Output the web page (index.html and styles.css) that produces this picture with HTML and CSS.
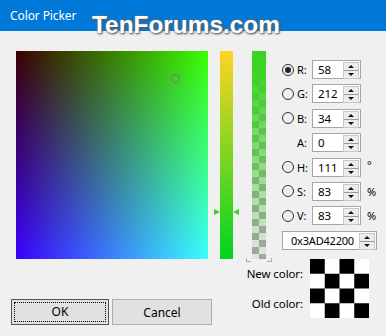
FILE: index.html
```html
<!doctype html>
<html>
<head>
<meta charset="utf-8">
<title>Color Picker</title>
<link rel="stylesheet" href="styles.css">
</head>
<body>
<div class="titlebar">Color Picker</div>
<div class="watermark">TenForums.com</div>

<div class="main">
  <div class="field"><span class="ring" style="left:155px;top:23px"></span></div>
  <div class="rstrip">
    <span class="arrow arrow-l" style="top:158px"></span>
    <span class="arrow arrow-r" style="top:158px"></span>
  </div>
  <div class="astrip">
    <span class="thumb thumb-l"></span>
    <span class="thumb thumb-r"></span>
  </div>

  <div class="panel">
    <div class="row"><span class="radio on"></span><span class="lbl">R:</span><span class="box">58<i class="spin"></i></span><span class="unit"></span></div>
    <div class="row"><span class="radio"></span><span class="lbl">G:</span><span class="box">212<i class="spin"></i></span><span class="unit"></span></div>
    <div class="row"><span class="radio"></span><span class="lbl">B:</span><span class="box">34<i class="spin"></i></span><span class="unit"></span></div>
    <div class="row"><span></span><span class="lbl">A:</span><span class="box">0<i class="spin"></i></span><span class="unit"></span></div>
    <div class="row"><span class="radio"></span><span class="lbl">H:</span><span class="box">111<i class="spin"></i></span><span class="unit deg">°</span></div>
    <div class="row"><span class="radio"></span><span class="lbl">S:</span><span class="box">83<i class="spin"></i></span><span class="unit">%</span></div>
    <div class="row"><span class="radio"></span><span class="lbl">V:</span><span class="box">83<i class="spin"></i></span><span class="unit">%</span></div>
    <div class="row hexrow"><span class="box hex">0x3AD42200<i class="spin"></i></span></div>
  </div>
</div>

<div class="bottom">
  <div class="buttons">
    <button class="btn focus"><span>OK</span></button>
    <button class="btn">Cancel</button>
  </div>
  <div class="preview">
    <div class="plabels">
      <span>New color:</span>
      <span>Old color:</span>
    </div>
    <div class="swatch"></div>
  </div>
</div>
</body>
</html>
```

FILE: styles.css
```css
body{
margin:0;
background:#f0f0f0;
font-family:"Noto Sans","Open Sans",sans-serif;
font-size:11px;
letter-spacing:-0.1px;
color:#000;
width:386px;
height:336px;
overflow:hidden;
position:relative;
}
.titlebar{
height:31px;
background:#0078d7;
color:#fff;
font-size:12px;
line-height:31px;
padding-left:10px;
box-sizing:border-box;
}
.watermark{
position:absolute;
left:92px;
top:11px;
font-family:"Liberation Sans",Arial,sans-serif;
font-weight:bold;
font-size:24.4px;
letter-spacing:0;
color:#fff;
text-shadow:1px 1px 2px #555,0 0 3px #777;
}
.main{
display:flex;
align-items:flex-start;
margin-top:20px;
padding-left:16px;
}
.field{
position:relative;
width:192px;
height:208px;
background:linear-gradient(to right,#000,#0f0),linear-gradient(to bottom,#000,#00f),#3a0000;
background-blend-mode:screen;
}
.ring{
position:absolute;
width:7px;
height:7px;
border:1px solid #777;
border-radius:50%;
}
.rstrip{
position:relative;
margin-left:12px;
width:13px;
height:208px;
background:linear-gradient(to bottom,#ffd422,#00d422);
}
.arrow{
position:absolute;
width:0;
height:0;
border-top:3.5px solid transparent;
border-bottom:3.5px solid transparent;
}
.arrow-l{
left:-6px;
border-left:6px solid #3ad422;
}
.arrow-r{
right:-6px;
border-right:6px solid #3ad422;
}
.astrip{
position:relative;
margin-left:19px;
width:14px;
height:208px;
background:linear-gradient(to bottom,#3ad422 8%,rgba(58,212,34,0)),
  conic-gradient(#e4e4e4 0 25%,#a4a4a4 0 50%,#e4e4e4 0 75%,#a4a4a4 0);
background-size:100% 100%,14px 14px;
}
.thumb{
position:absolute;
bottom:-3px;
width:4px;
height:3px;
border-bottom:1px solid #aaa;
}
.thumb-l{
left:-6px;
border-left:1px solid #aaa;
}
.thumb-r{
right:-6px;
border-right:1px solid #aaa;
}
.panel{
margin-left:16px;
margin-top:9px;
}
.row{
display:grid;
grid-template-columns:14px 16px 49px 16px;
align-items:center;
height:19px;
margin-bottom:5.4px;
}
.radio{
width:10px;
height:10px;
border:1px solid #333;
border-radius:50%;
position:relative;
}
.radio.on::after{
content:"";
position:absolute;
left:2px;
top:2px;
width:6px;
height:6px;
border-radius:50%;
background:#222;
}
.lbl{
padding-left:1px;
}
.box{
position:relative;
height:19px;
box-sizing:border-box;
border:1px solid #a6a6a6;
background:#fff;
padding-left:5px;
line-height:17px;
font-size:11.5px;
}
.spin{
position:absolute;
right:1px;
top:1px;
width:14px;
height:15px;
background:
  linear-gradient(#9a9a9a,#9a9a9a) center/100% 1px no-repeat,
  #ececec;
border:1px solid #c8c8c8;
}
.spin::before,.spin::after{
content:"";
position:absolute;
left:4px;
width:0;
height:0;
border-left:3.5px solid transparent;
border-right:3.5px solid transparent;
}
.spin::before{
top:2px;
border-bottom:3.5px solid #111;
}
.spin::after{
bottom:2px;
border-top:3.5px solid #111;
}
.unit{
padding-left:6px;
}
.deg{
position:relative;
top:-3px;
}
.hexrow{
grid-template-columns:95px;
}
.hex{
padding-left:8px;
font-size:11px;
letter-spacing:-0.2px;
}
.bottom{
display:flex;
align-items:flex-start;
}
.buttons{
display:flex;
gap:3px;
padding-left:11px;
margin-top:40px;
}
.btn{
width:98px;
height:26px;
background:#e1e1e1;
border:1px solid #adadad;
font-family:"Noto Sans","Open Sans",sans-serif;
font-size:12px;
color:#000;
padding:0;
}
.btn + .btn{
width:100px;
}
.btn.focus{
border-color:#555;
padding:2px;
}
.btn.focus span{
display:block;
height:100%;
box-sizing:border-box;
border:1px dotted #000;
line-height:18px;
}
.preview{
display:flex;
margin-left:auto;
margin-right:17px;
}
.plabels{
display:flex;
flex-direction:column;
align-items:flex-end;
justify-content:space-around;
padding-right:7px;
font-size:11.5px;
}
.swatch{
width:59px;
height:59px;
background:conic-gradient(#fff 0 25%,#000 0 50%,#fff 0 75%,#000 0);
background-size:50% 50%;
}
```
